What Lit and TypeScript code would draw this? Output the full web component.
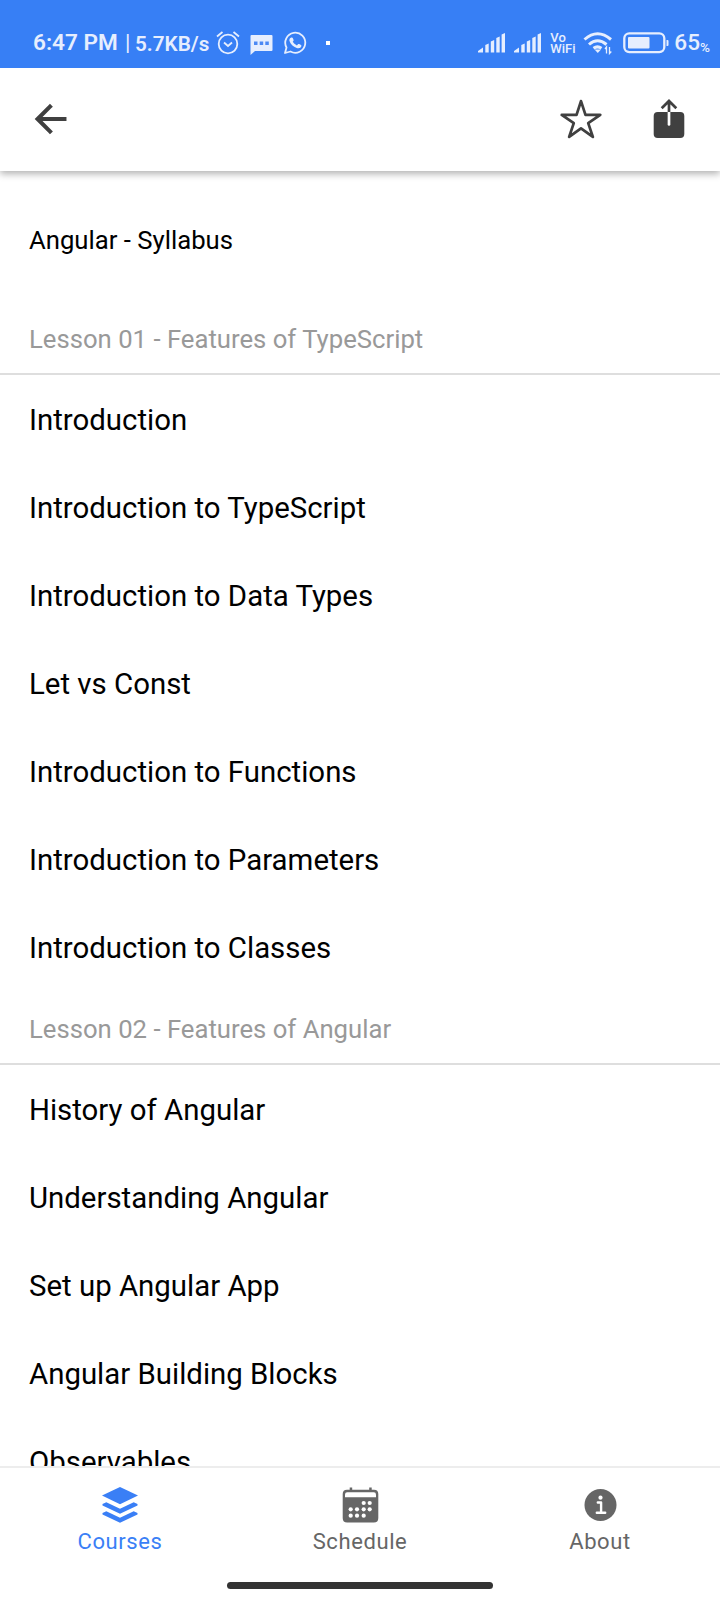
import { LitElement, html, css, svg } from "lit";
import { customElement } from "lit/decorators.js";

const lessons = [
  {
    title: "Lesson 01 - Features of TypeScript",
    items: [
      "Introduction",
      "Introduction to TypeScript",
      "Introduction to Data Types",
      "Let vs Const",
      "Introduction to Functions",
      "Introduction to Parameters",
      "Introduction to Classes",
    ],
  },
  {
    title: "Lesson 02 - Features of Angular",
    items: [
      "History of Angular",
      "Understanding Angular",
      "Set up Angular App",
      "Angular Building Blocks",
      "Observables",
    ],
  },
];

const signal = html`<svg class="signal" width="27" height="20" viewBox="0 0 27 20">
  <path d="M0 19.5V18L5 14.5V19.5zM7.3 12l3.4-1.5v9H7.3zM12.800 8.500L16.200 7v12.500h-3.400zM18.300 5l3.400-1.500v16h-3.400zM23.600 1.500L27 0v19.500h-3.400z" fill="currentColor" />
</svg>`;

const dots = [
  [21.7, 17], [27.7, 17],
  [8.7, 23.3], [15, 23.3], [21.7, 23.3], [27.7, 23.3],
  [8.7, 29.7], [15, 29.7], [21.7, 29.7],
];

@customElement("status-bar")
export class StatusBar extends LitElement {
  static styles = css`
    :host { display: flex; justify-content: space-between; height: 68px; box-sizing: border-box;
      padding: 26px 10px 0 33px; background: #377ff5; color: #e6eefe; position: relative; z-index: 2;
      font: 500 22px/34px Roboto, sans-serif; }
    .side { display: flex; align-items: center; height: 34px; }
    .clock { font-size: 22.600px; font-weight: 600; white-space: pre; width: 92px; }
    .rate { font-size: 20.700px; font-weight: 600; width: 80px; white-space: nowrap; padding-top: 1px; }
    svg { display: block; }
    .alarm { margin-left: 1px; }
    .chat { margin-left: 10px; margin-top: 3px; }
    .call { margin-left: 10px; }
    .dot { width: 4px; height: 4px; background: #fff; margin-left: 19px; }
    .signal { margin-right: 9px; }
    .vo { font: 500 13px/11.500px Roboto, sans-serif; width: 33px; }
    .bat { margin-left: 10px; }
    .pct { font-size: 22.600px; margin-left: 5px; }
    .sign { font-size: 13.500px; padding-top: 7px; }
    .bar { font-weight: 400; width: 10px; }
  `;
  render() {
    return html`
      <div class="side">
        <span class="clock">6:47 PM</span><span class="bar">|</span><span class="rate">5.7KB/s</span>
        <svg class="alarm" width="24" height="24" viewBox="0 0 24 24" fill="none" stroke="currentColor" stroke-width="1.800">
          <circle cx="12" cy="13" r="9.300" /><path d="M8 11.500l4 3.500 4-3.500M1 5.500L6.500 1M23 5.500L17.500 1" />
        </svg>
        <svg class="chat" width="23" height="22" viewBox="0 0 23 22">
          <path d="M1.500 1h20q1 0 1 1v14q0 1-1 1H5l-4.500 4V2q0-1 1-1z" fill="currentColor" />
          <path d="M4 7.500h3.500V11H4zM9.700 7.500h3.500V11H9.700zM15.300 7.500h3.500V11h-3.500z" fill="#4c89f4" />
        </svg>
        <svg class="call" width="24" height="24" viewBox="0 0 24 24">
          <path d="M2 22l1.500-5.500A10 10 0 1 1 7.500 20.500z" fill="none" stroke="currentColor" stroke-width="1.800" stroke-linejoin="round" />
          <path d="M8.300 6.500c.8-.3 1.300 0 1.600.7l.7 1.700c.1.600-.4 1.200-.9 1.700 1 1.800 2.300 3 4.200 3.800l1.300-1.300c.3-.3.700-.2 1 0l1.800 1c.6.3.4 1.400 0 2-.8 1.200-2.500 1.500-4.300.9-3.500-1.200-6.200-4-7.200-7-.5-1.500.4-3.100 1.800-3.500z" fill="currentColor" />
        </svg>
        <span class="dot"></span>
      </div>
      <div class="side">
        ${signal}${signal}
        <div class="vo"><div>Vo</div><div>WiFi</div></div>
        <svg width="30" height="24" viewBox="0 0 30 24" fill="none" stroke="currentColor" stroke-width="3">
          <path d="M1.500 8.500Q14.500-3 28 8.500M6 13.500Q14.500 6 23.500 13.500M10.500 17.200Q14.500 14.500 18.500 17.200" />
          <path d="M11.500 18.500h6.500L14.800 22z" fill="currentColor" stroke="none" />
          <path d="M23.500 22.500V16l-1.500 2M26.500 16v6.500l1.800-2" stroke-width="1.300" />
        </svg>
        <svg class="bat" width="46" height="22" viewBox="0 0 46 22">
          <rect x="1.300" y="1.300" width="40" height="18.800" rx="5" fill="none" stroke="currentColor" stroke-width="2.300" />
          <rect x="5" y="5" width="21.500" height="11.500" rx="1" fill="currentColor" />
          <path d="M43.500 8h1q1 0 1 1v4q0 1-1 1h-1z" fill="currentColor" />
        </svg>
        <span class="pct">65</span><span class="sign">%</span>
      </div>`;
  }
}

@customElement("top-toolbar")
export class TopToolbar extends LitElement {
  static styles = css`
    :host { display: flex; align-items: center; height: 103px; box-sizing: border-box; padding: 0 29px 2px;
      background: #fff; color: #404040; box-shadow: 0 3px 7px rgba(0, 0, 0, .3); position: relative; z-index: 1; }
    svg { display: block; }
    .star { margin-left: auto; margin-right: 44px; }
  `;
  render() {
    return html`
      <svg width="44" height="44" viewBox="0 0 512 512" fill="none" stroke="currentColor" stroke-width="48" stroke-linecap="square">
        <path d="M244 400L100 256l144-144M120 256h292" />
      </svg>
      <svg class="star" width="44" height="44" viewBox="0 0 512 512" fill="none" stroke="currentColor" stroke-width="32" stroke-linejoin="round">
        <path d="M480 208H308L256 48l-52 160H32l140 96-54 160 138-100 138 100-54-160z" />
      </svg>
      <svg width="44" height="44" viewBox="0 0 44 44">
        <rect x="6.700" y="15" width="30.600" height="26" rx="4" fill="currentColor" />
        <path d="M22 15v12.500" stroke="#fff" stroke-width="2.700" stroke-linecap="round" />
        <path d="M22 15V5M14.700 11.300L22 4l7.300 7.300" fill="none" stroke="currentColor" stroke-width="2.700" />
      </svg>`;
  }
}

@customElement("tab-bar")
export class TabBar extends LitElement {
  static styles = css`
    :host { display: block; height: 134px; box-sizing: border-box; border-top: 2px solid #ededed; background: #fff; color: #666; }
    .tabs { display: grid; grid-template-columns: repeat(3, 1fr); height: 100px; }
    .tab { display: flex; flex-direction: column; align-items: center; padding-top: 18px;
      font: 400 22px/26px Roboto, sans-serif; letter-spacing: .6px; }
    .tab svg { display: block; margin-bottom: 4.500px; }
    .active { color: #3a7ff6; }
    .home { width: 266px; height: 7px; border-radius: 4px; background: #333; margin: 14px auto 0; }
  `;
  render() {
    return html`
      <div class="tabs">
        <div class="tab active">
          <svg width="36" height="38" viewBox="0 0 36 38" fill="currentColor">
            <path d="M18 1L36 9.500 18 18.300 0 9.500z" />
            <path d="M.5 18l3.800-1.700L18 22.800l13.700-6.500 3.800 1.700v1.600L18 27.700.5 19.600z" />
            <path d="M.5 27l3.800-1.700L18 31.800l13.700-6.500 3.800 1.700v1.600L18 36.700.5 28.600z" />
          </svg>
          <span>Courses</span>
        </div>
        <div class="tab">
          <svg width="38" height="38" viewBox="-1 0 38 38">
            <path d="M5 3.700h2.700V1.500h2.500v2.200h17V1.500h2.500v2.200H32q4.300 0 4.300 4.300v24q0 4.500-4.500 4.500H5.200Q.7 36.500.7 32V8Q.7 3.700 5 3.700z" fill="currentColor" />
            <path d="M3 11.200V8.500q0-2.200 2.200-2.200h26.600q2.200 0 2.200 2.200v2.700z" fill="#fff" />
            ${dots.map(([x, y]) => svg`<circle cx=${x} cy=${y} r="2.100" fill="#fff" />`)}
          </svg>
          <span>Schedule</span>
        </div>
        <div class="tab">
          <svg width="36" height="38" viewBox="0 0 36 38">
            <circle cx="18.500" cy="19" r="16" fill="currentColor" />
            <circle cx="18.500" cy="11.700" r="2.100" fill="#fff" />
            <path d="M15.800 16.500h3.300v10M14.800 26.700h8.400" fill="none" stroke="#fff" stroke-width="2.400" stroke-linecap="round" stroke-linejoin="round" />
          </svg>
          <span>About</span>
        </div>
      </div>
      <div class="home"></div>`;
  }
}

@customElement("app-root")
export class AppRoot extends LitElement {
  static styles = css`
    :host { display: flex; flex-direction: column; width: 720px; height: 1600px; background: #fff; overflow: hidden;
      font-family: Roboto, sans-serif; color: #000; }
    status-bar, top-toolbar, tab-bar { flex: none; }
    .content { flex: 1; min-height: 0; overflow: hidden; }
    .title { font-size: 25.700px; line-height: 30px; font-weight: 400; margin: 0; padding: 54px 29px 45px; }
    .lesson { height: 75px; box-sizing: border-box; border-bottom: 2px solid #dedede; padding: 24px 29px 0;
      font-size: 25.700px; line-height: 30px; color: #999; }
    .row { height: 88px; line-height: 88px; padding: 0 29px; font-size: 29.400px; }
    .rows { padding-top: 1px; height: 614px; }
  `;
  render() {
    return html`
      <status-bar></status-bar>
      <top-toolbar></top-toolbar>
      <main class="content">
        <h1 class="title">Angular - Syllabus</h1>
        ${lessons.map((l) => html`
          <section>
            <div class="lesson">${l.title}</div>
            <div class="rows">${l.items.map((i) => html`<div class="row">${i}</div>`)}</div>
          </section>`)}
      </main>
      <tab-bar></tab-bar>`;
  }
}
